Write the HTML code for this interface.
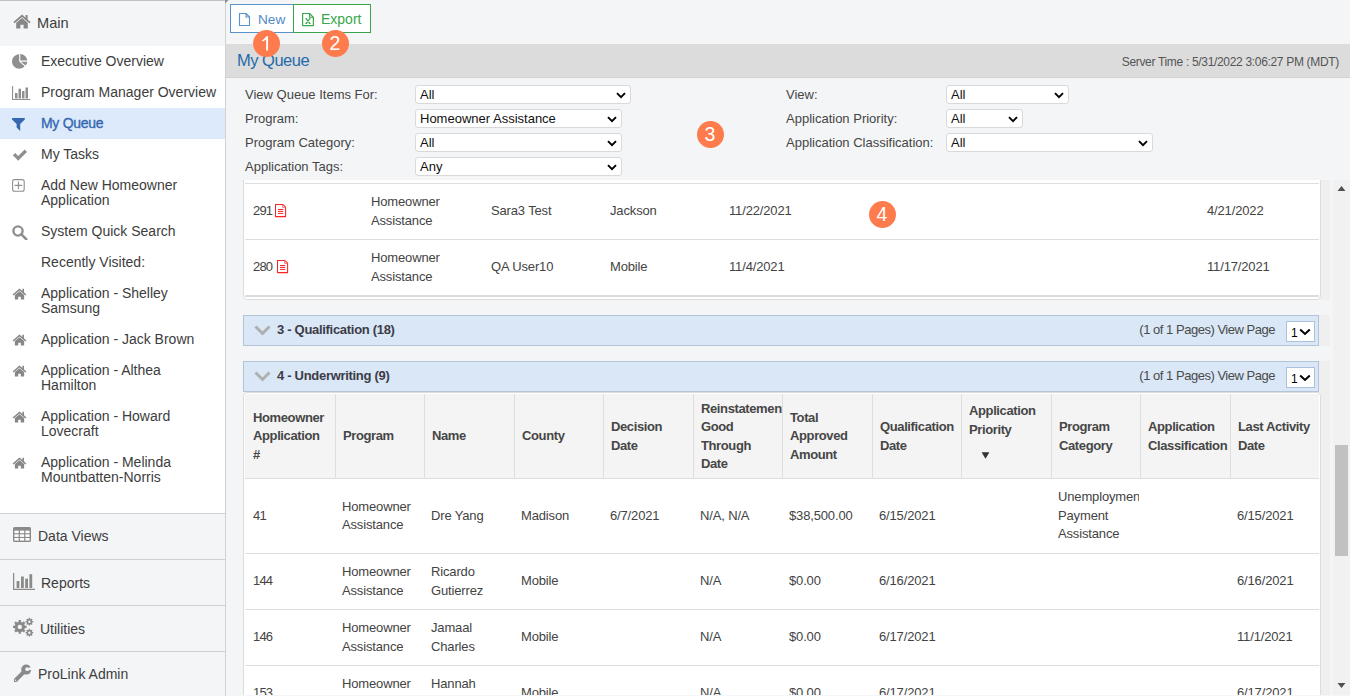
<!DOCTYPE html>
<html><head><meta charset="utf-8">
<style>
*{box-sizing:border-box;margin:0;padding:0}
html,body{width:1350px;height:696px;overflow:hidden;background:#f4f5f7;font-family:"Liberation Sans",sans-serif;color:#333}
.a{position:absolute}
#side{position:absolute;left:0;top:0;width:226px;height:696px;background:#fff;border-right:1px solid #d2d2d2}
.si{position:absolute;left:41px;width:182px;font-size:14px;line-height:15px;color:#3d3d3d;white-space:nowrap}
.bs{position:absolute;left:0;width:225px;height:46px;background:#f4f5f7;border-top:1px solid #d0d0d0}
.bs .t{position:absolute;font-size:14px;line-height:15px;color:#3d3d3d;white-space:nowrap}
.ic{position:absolute}
.badge{position:absolute;width:27px;height:27px;border-radius:50%;background:#fe7b4d;color:#fff;font-size:19.5px;line-height:27px;text-align:center;z-index:20}
.lbl{position:absolute;font-size:13px;line-height:15px;color:#454545;white-space:nowrap}
.sel{position:absolute;height:19px;background:#fff;border:1px solid #d9d9d9;border-radius:3px}.sel span{position:absolute;left:4px;top:1px;font-size:13px;line-height:15px;color:#111}.sel svg{position:absolute;right:4px;top:5.5px}
.td{position:absolute;font-size:13px;line-height:18.5px;color:#434343;white-space:nowrap;letter-spacing:-0.15px}
.th{position:absolute;font-size:13px;line-height:18.5px;color:#464646;font-weight:bold;white-space:nowrap;letter-spacing:-0.38px}
.hl{position:absolute;height:1px;background:#dedede}
.vl{position:absolute;width:1px;background:#dedede}
.sec{position:absolute;left:243px;width:1076px;height:31px;background:#d9e7f6;border:1px solid #b2c4d8}
.sec .tt{position:absolute;left:33px;top:6px;font-size:13px;line-height:15px;font-weight:bold;color:#3c3c48;letter-spacing:-0.3px}
.sec .pg{position:absolute;right:43px;top:6px;font-size:13px;line-height:15px;color:#4a4a4a;letter-spacing:-0.48px}
.sec .ps{position:absolute;left:1042px;top:5px;width:29px;height:21px;background:#fff;border:1px solid #adc2da}
.strip{position:absolute;left:1319px;width:11px;background:#efefef}
</style></head><body>

<!-- SIDEBAR -->
<div id="side">
  <div class="a" style="left:0;top:0;width:225px;height:1px;background:#c2c2c2"></div>
  <div class="a" style="left:0;top:1px;width:225px;height:45px;background:#f4f5f7"></div>
  <svg class="ic" style="left:12.8px;top:14.3px" width="18" height="15" viewBox="0 0 18 15"><path d="M9 0.6 L0.4 8 L1.6 9.3 L9 3 L16.4 9.3 L17.6 8 L14.6 5.4 V1 H12.6 V3.7 Z" fill="#878787"/><path d="M3.2 8.8 L9 4 L14.8 8.8 V14.5 H10.6 V10.8 H7.4 V14.5 H3.2 Z" fill="#878787"/></svg>
  <div class="a" style="left:37px;top:16px;font-size:14.6px;line-height:15px;color:#3d3d3d">Main</div>

  <!-- items -->
  <svg class="ic" style="left:12px;top:54px" width="16" height="15" viewBox="0 0 16 15"><path d="M7.2 0.3 A7.2 7.2 0 1 0 12.6 12.3 L7.2 7.5 Z" fill="#8f8f8f"/><path d="M8.3 0 V6.6 H15.3 A7 7 0 0 0 8.3 0 Z" fill="#8f8f8f"/><path d="M8.9 7.7 L13.4 11.6 A7 7 0 0 0 15.4 7.7 Z" fill="#8f8f8f"/></svg>
  <div class="si" style="top:54px">Executive Overview</div>

  <svg class="ic" style="left:12px;top:86px" width="19" height="14" viewBox="0 0 19 14"><path d="M0.5 0 V13.5 H18.5" stroke="#8f8f8f" stroke-width="1.2" fill="none"/><rect x="3" y="7" width="2.5" height="5.5" fill="#8f8f8f"/><rect x="6.5" y="2.7" width="2.5" height="9.8" fill="#8f8f8f"/><rect x="10" y="5" width="2.5" height="7.5" fill="#8f8f8f"/><rect x="13.5" y="1.5" width="2.5" height="11" fill="#8f8f8f"/></svg>
  <div class="si" style="top:85px">Program Manager Overview</div>

  <div class="a" style="left:0;top:108px;width:225px;height:31px;background:#dceafb"></div>
  <svg class="ic" style="left:12px;top:118px" width="13" height="13" viewBox="0 0 13 13"><path d="M0 0 H12.8 V1.5 L8.2 6 V13 L4.6 9.6 V6 L0 1.5 Z" fill="#3668b1"/></svg>
  <div class="si" style="top:116px;color:#3567b0;font-size:14px;letter-spacing:-0.3px;-webkit-text-stroke:0.35px #3567b0">My Queue</div>

  <svg class="ic" style="left:10px;top:145px" width="20" height="20" viewBox="0 0 20 20"><path d="M2.9 10.2 L5.2 7.9 L8.2 10.9 L14.7 4.6 L17 6.9 L8.2 15.7 Z" fill="#8f8f8f"/></svg>
  <div class="si" style="top:147px">My Tasks</div>

  <svg class="ic" style="left:12px;top:179px" width="13" height="13" viewBox="0 0 13 13"><rect x="0.6" y="0.6" width="11.6" height="11.6" rx="2" stroke="#8f8f8f" stroke-width="1.1" fill="none"/><path d="M6.4 2.6 V10.2 M2.6 6.4 H10.2" stroke="#8f8f8f" stroke-width="1.1"/></svg>
  <div class="si" style="top:178px">Add New Homeowner<br>Application</div>

  <svg class="ic" style="left:12px;top:225px" width="16" height="15" viewBox="0 0 16 15"><circle cx="6" cy="6" r="4.6" stroke="#8f8f8f" stroke-width="2.4" fill="none"/><path d="M9.2 9.2 L14.2 14.2" stroke="#8f8f8f" stroke-width="2.6" stroke-linecap="round"/></svg>
  <div class="si" style="top:224px">System Quick Search</div>

  <div class="si" style="top:255px">Recently Visited:</div>

  <svg class="ic h2" style="left:12px;top:288px" width="15" height="12" viewBox="0 0 18 15"><path d="M9 0.6 L0.4 8 L1.6 9.3 L9 3 L16.4 9.3 L17.6 8 L14.6 5.4 V1 H12.6 V3.7 Z" fill="#878787"/><path d="M3.2 8.8 L9 4 L14.8 8.8 V14.5 H10.6 V10.8 H7.4 V14.5 H3.2 Z" fill="#878787"/></svg>
  <div class="si" style="top:286px">Application - Shelley<br>Samsung</div>

  <svg class="ic" style="left:12px;top:334px" width="15" height="12" viewBox="0 0 18 15"><path d="M9 0.6 L0.4 8 L1.6 9.3 L9 3 L16.4 9.3 L17.6 8 L14.6 5.4 V1 H12.6 V3.7 Z" fill="#878787"/><path d="M3.2 8.8 L9 4 L14.8 8.8 V14.5 H10.6 V10.8 H7.4 V14.5 H3.2 Z" fill="#878787"/></svg>
  <div class="si" style="top:332px">Application - Jack Brown</div>

  <svg class="ic" style="left:12px;top:365px" width="15" height="12" viewBox="0 0 18 15"><path d="M9 0.6 L0.4 8 L1.6 9.3 L9 3 L16.4 9.3 L17.6 8 L14.6 5.4 V1 H12.6 V3.7 Z" fill="#878787"/><path d="M3.2 8.8 L9 4 L14.8 8.8 V14.5 H10.6 V10.8 H7.4 V14.5 H3.2 Z" fill="#878787"/></svg>
  <div class="si" style="top:363px">Application - Althea<br>Hamilton</div>

  <svg class="ic" style="left:12px;top:411px" width="15" height="12" viewBox="0 0 18 15"><path d="M9 0.6 L0.4 8 L1.6 9.3 L9 3 L16.4 9.3 L17.6 8 L14.6 5.4 V1 H12.6 V3.7 Z" fill="#878787"/><path d="M3.2 8.8 L9 4 L14.8 8.8 V14.5 H10.6 V10.8 H7.4 V14.5 H3.2 Z" fill="#878787"/></svg>
  <div class="si" style="top:409px">Application - Howard<br>Lovecraft</div>

  <svg class="ic" style="left:12px;top:457px" width="15" height="12" viewBox="0 0 18 15"><path d="M9 0.6 L0.4 8 L1.6 9.3 L9 3 L16.4 9.3 L17.6 8 L14.6 5.4 V1 H12.6 V3.7 Z" fill="#878787"/><path d="M3.2 8.8 L9 4 L14.8 8.8 V14.5 H10.6 V10.8 H7.4 V14.5 H3.2 Z" fill="#878787"/></svg>
  <div class="si" style="top:455px">Application - Melinda<br>Mountbatten-Norris</div>

  <!-- bottom sections -->
  <div class="bs" style="top:513px">
    <svg class="ic" style="left:12.8px;top:13px" width="18" height="15" viewBox="0 0 18 15"><rect x="0" y="0" width="18" height="15" rx="1.5" fill="#8a8a8a"/><g fill="#fff"><rect x="1.4" y="3.6" width="4.3" height="2.6"/><rect x="6.9" y="3.6" width="4.3" height="2.6"/><rect x="12.4" y="3.6" width="4.2" height="2.6"/><rect x="1.4" y="7.3" width="4.3" height="2.6"/><rect x="6.9" y="7.3" width="4.3" height="2.6"/><rect x="12.4" y="7.3" width="4.2" height="2.6"/><rect x="1.4" y="11" width="4.3" height="2.6"/><rect x="6.9" y="11" width="4.3" height="2.6"/><rect x="12.4" y="11" width="4.2" height="2.6"/></g></svg>
    <div class="t" style="left:38px;top:15px">Data Views</div>
  </div>
  <div class="bs" style="top:559px">
    <svg class="ic" style="left:13px;top:13px" width="22" height="17" viewBox="0 0 22 17"><path d="M0.6 0 V16.3 H22" stroke="#8a8a8a" stroke-width="1.3" fill="none"/><rect x="3.6" y="8" width="2.8" height="7" fill="#8a8a8a"/><rect x="8" y="3.5" width="2.8" height="11.5" fill="#8a8a8a"/><rect x="12.2" y="5.6" width="2.8" height="9.4" fill="#8a8a8a"/><rect x="16.4" y="1.2" width="2.8" height="13.8" fill="#8a8a8a"/></svg>
    <div class="t" style="left:41px;top:16px">Reports</div>
  </div>
  <div class="bs" style="top:605px">
    <svg class="ic" style="left:12px;top:11px" width="23" height="21" viewBox="0 0 23 21"><path fill-rule="evenodd" fill="#8a8a8a" d="M6.64 4.73 L6.59 3.11 L9.01 3.11 L8.96 4.73 L10.64 5.42 L11.75 4.24 L13.46 5.95 L12.28 7.06 L12.97 8.74 L14.59 8.69 L14.59 11.11 L12.97 11.06 L12.28 12.74 L13.46 13.85 L11.75 15.56 L10.64 14.38 L8.96 15.07 L9.01 16.69 L6.59 16.69 L6.64 15.07 L4.96 14.38 L3.85 15.56 L2.14 13.85 L3.32 12.74 L2.63 11.06 L1.01 11.11 L1.01 8.69 L2.63 8.74 L3.32 7.06 L2.14 5.95 L3.85 4.24 L4.96 5.42 Z M7.8 7.7 A2.2 2.2 0 1 0 7.8 12.1 A2.2 2.2 0 1 0 7.8 7.7 Z"/><path fill-rule="evenodd" fill="#8a8a8a" d="M16.76 1.87 L16.71 0.86 L18.09 0.86 L18.04 1.87 L18.95 2.25 L19.63 1.50 L20.60 2.47 L19.85 3.15 L20.23 4.06 L21.24 4.01 L21.24 5.39 L20.23 5.34 L19.85 6.25 L20.60 6.93 L19.63 7.90 L18.95 7.15 L18.04 7.53 L18.09 8.54 L16.71 8.54 L16.76 7.53 L15.85 7.15 L15.17 7.90 L14.20 6.93 L14.95 6.25 L14.57 5.34 L13.56 5.39 L13.56 4.01 L14.57 4.06 L14.95 3.15 L14.20 2.47 L15.17 1.50 L15.85 2.25 Z M17.4 3.5 A1.2 1.2 0 1 0 17.4 5.9 A1.2 1.2 0 1 0 17.4 3.5 Z"/><path fill-rule="evenodd" fill="#8a8a8a" d="M16.76 12.87 L16.71 11.86 L18.09 11.86 L18.04 12.87 L18.95 13.25 L19.63 12.50 L20.60 13.47 L19.85 14.15 L20.23 15.06 L21.24 15.01 L21.24 16.39 L20.23 16.34 L19.85 17.25 L20.60 17.93 L19.63 18.90 L18.95 18.15 L18.04 18.53 L18.09 19.54 L16.71 19.54 L16.76 18.53 L15.85 18.15 L15.17 18.90 L14.20 17.93 L14.95 17.25 L14.57 16.34 L13.56 16.39 L13.56 15.01 L14.57 15.06 L14.95 14.15 L14.20 13.47 L15.17 12.50 L15.85 13.25 Z M17.4 14.5 A1.2 1.2 0 1 0 17.4 16.9 A1.2 1.2 0 1 0 17.4 14.5 Z"/></svg>
    <div class="t" style="left:40px;top:16px">Utilities</div>
  </div>
  <div class="bs" style="top:651px">
    <svg class="ic" style="left:12px;top:10px" width="22" height="22" viewBox="0 0 22 22"><defs><mask id="wm"><rect width="22" height="22" fill="#fff"/><path d="M14 7.5 L20 4.3 L21 8.6 Z" fill="#000"/><circle cx="15.2" cy="7.2" r="1.9" fill="#000"/></mask></defs><g mask="url(#wm)" fill="#8a8a8a"><circle cx="14.2" cy="7.6" r="5"/><path d="M3.2 18.6 L11.2 10.6" stroke="#8a8a8a" stroke-width="4.1" stroke-linecap="round"/></g><circle cx="3.6" cy="18.2" r="0.7" fill="#f4f5f7"/></svg>
    <div class="t" style="left:38px;top:15px">ProLink Admin</div>
  </div>
</div>

<!-- MAIN -->
<svg class="ic" style="left:225px;top:0;z-index:5" width="5" height="5" viewBox="0 0 5 5"><path d="M0 0 H3.6 L0 3.6 Z" fill="#8d8d8d"/></svg>
<div class="a" style="left:226px;top:0;width:1124px;height:696px;background:#f4f5f7"></div>
<!-- toolbar -->
<div class="a" style="left:230px;top:4px;width:64px;height:29px;background:#fff;border:1px solid #5992c9"></div>
<svg class="ic" style="left:238px;top:12px" width="13" height="15" viewBox="0 0 13 15"><path d="M1.5 1.5 H8 L11.5 5 V13.5 H1.5 Z" stroke="#5992c9" stroke-width="1.1" fill="none" stroke-linejoin="round"/><path d="M8 1.5 V5 H11.5" stroke="#5992c9" stroke-width="1.1" fill="none"/></svg>
<div class="a" style="left:258px;top:12px;font-size:13.6px;line-height:15px;color:#4f8ac6">New</div>
<div class="a" style="left:293px;top:4px;width:78px;height:29px;background:#fff;border:1px solid #3aa64b"></div>
<svg class="ic" style="left:301px;top:12px" width="14" height="15" viewBox="0 0 14 15"><path d="M1.6 1.5 H8.6 L12.4 5.3 V13.6 H1.6 Z" stroke="#3aa64b" stroke-width="1.2" fill="none" stroke-linejoin="round"/><path d="M8.6 1.5 V5.3 H12.4" stroke="#3aa64b" stroke-width="1.1" fill="none"/><path d="M5.2 6.8 L8.8 11.4 M8.8 6.8 L5.2 11.4 M4.4 6.8 H6.2 M7.8 6.8 H9.6 M4.4 11.4 H6.2 M7.8 11.4 H9.6" stroke="#3aa64b" stroke-width="1.1"/></svg>
<div class="a" style="left:321px;top:12px;font-size:14px;line-height:15px;color:#3aa64b">Export</div>

<!-- header bar -->
<div class="a" style="left:226px;top:44px;width:1124px;height:34px;background:#dcdcdc"></div>
<div class="a" style="left:226px;top:77px;width:1124px;height:1px;background:#d2d2d2"></div>
<div class="a" style="left:237px;top:52px;font-size:16.5px;line-height:17px;color:#1f6aab;letter-spacing:-0.5px">My Queue</div>
<div class="a" style="left:1121px;top:55px;width:218px;text-align:right;font-size:12px;line-height:14px;color:#555;letter-spacing:-0.32px;white-space:nowrap">Server Time : 5/31/2022 3:06:27 PM (MDT)</div>

<!-- filters -->
<div class="lbl" style="left:245px;top:87px">View Queue Items For:</div>
<div class="lbl" style="left:245px;top:111px">Program:</div>
<div class="lbl" style="left:245px;top:135px">Program Category:</div>
<div class="lbl" style="left:245px;top:159px">Application Tags:</div>
<div class="sel" style="left:415px;top:85px;width:216px"><span>All</span><svg width="10" height="7" viewBox="0 0 10 7"><path d="M1 1.2 L5 5.2 L9 1.2" stroke="#000" stroke-width="1.9" fill="none"/></svg></div>
<div class="sel" style="left:415px;top:109px;width:207px"><span>Homeowner Assistance</span><svg width="10" height="7" viewBox="0 0 10 7"><path d="M1 1.2 L5 5.2 L9 1.2" stroke="#000" stroke-width="1.9" fill="none"/></svg></div>
<div class="sel" style="left:415px;top:133px;width:207px"><span>All</span><svg width="10" height="7" viewBox="0 0 10 7"><path d="M1 1.2 L5 5.2 L9 1.2" stroke="#000" stroke-width="1.9" fill="none"/></svg></div>
<div class="sel" style="left:415px;top:157px;width:207px"><span>Any</span><svg width="10" height="7" viewBox="0 0 10 7"><path d="M1 1.2 L5 5.2 L9 1.2" stroke="#000" stroke-width="1.9" fill="none"/></svg></div>
<div class="lbl" style="left:786px;top:87px">View:</div>
<div class="lbl" style="left:786px;top:111px">Application Priority:</div>
<div class="lbl" style="left:786px;top:135px">Application Classification:</div>
<div class="sel" style="left:946px;top:85px;width:123px"><span>All</span><svg width="10" height="7" viewBox="0 0 10 7"><path d="M1 1.2 L5 5.2 L9 1.2" stroke="#000" stroke-width="1.9" fill="none"/></svg></div>
<div class="sel" style="left:946px;top:109px;width:77px"><span>All</span><svg width="10" height="7" viewBox="0 0 10 7"><path d="M1 1.2 L5 5.2 L9 1.2" stroke="#000" stroke-width="1.9" fill="none"/></svg></div>
<div class="sel" style="left:946px;top:133px;width:207px"><span>All</span><svg width="10" height="7" viewBox="0 0 10 7"><path d="M1 1.2 L5 5.2 L9 1.2" stroke="#000" stroke-width="1.9" fill="none"/></svg></div>

<!-- scroll area -->
<div class="a" style="left:226px;top:180px;width:1107px;height:516px;overflow:hidden">
  <!-- coordinates inside are offset by (226,180) -->
  <div class="a" style="left:0;top:0;width:1107px;height:516px">
  </div>
</div>

<!-- panel 2 (top table) absolute in page coords -->
<div class="strip" style="top:180px;height:120px"></div>
<div class="a" style="left:243px;top:160px;width:1078px;height:140px;background:#fff;border:1px solid #dcdcdc;border-radius:4px;clip-path:inset(20px 0 0 0)"></div>
<div class="hl" style="left:245px;top:183px;width:1074px"></div>
<div class="hl" style="left:245px;top:239px;width:1074px"></div>
<div class="a" style="left:245px;top:295px;width:1074px;height:2px;background:#dcdcdc"></div>
<div class="td" style="left:253px;top:202px;letter-spacing:-0.8px">291</div>
<svg class="ic" style="left:275px;top:204px" width="12" height="14" viewBox="0 0 12 14"><path d="M0.5 0.5 H7.9 L10.6 3.2 V12.6 H0.5 Z" stroke="#fa2222" stroke-width="1.05" fill="none" stroke-linejoin="round"/><path d="M7.6 0.6 V3.4 H10.5" stroke="#fa6a6a" stroke-width="0.9" fill="none"/><path d="M3 5.5 H8.2 M3 7.4 H8.2 M3 9.4 H8.2" stroke="#fa2222" stroke-width="1"/></svg>
<div class="td" style="left:371px;top:193px">Homeowner<br>Assistance</div>
<div class="td" style="left:491px;top:202px">Sara3 Test</div>
<div class="td" style="left:610px;top:202px">Jackson</div>
<div class="td" style="left:729px;top:202px">11/22/2021</div>
<div class="td" style="left:1207px;top:202px">4/21/2022</div>

<div class="td" style="left:253px;top:258px;letter-spacing:-0.8px">280</div>
<svg class="ic" style="left:277px;top:260px" width="12" height="14" viewBox="0 0 12 14"><path d="M0.5 0.5 H7.9 L10.6 3.2 V12.6 H0.5 Z" stroke="#fa2222" stroke-width="1.05" fill="none" stroke-linejoin="round"/><path d="M7.6 0.6 V3.4 H10.5" stroke="#fa6a6a" stroke-width="0.9" fill="none"/><path d="M3 5.5 H8.2 M3 7.4 H8.2 M3 9.4 H8.2" stroke="#fa2222" stroke-width="1"/></svg>
<div class="td" style="left:371px;top:249px">Homeowner<br>Assistance</div>
<div class="td" style="left:491px;top:258px">QA User10</div>
<div class="td" style="left:610px;top:258px">Mobile</div>
<div class="td" style="left:729px;top:258px">11/4/2021</div>
<div class="td" style="left:1207px;top:258px">11/17/2021</div>

<!-- section 3 -->
<div class="strip" style="top:315px;height:31px"></div>
<div class="sec" style="top:315px">
  <svg class="ic" style="left:10px;top:9px" width="17" height="11" viewBox="0 0 17 11"><path d="M1.5 1.5 L8.5 8.5 L15.5 1.5" stroke="#afafaf" stroke-width="3" fill="none"/></svg>
  <div class="tt">3 - Qualification (18)</div>
  <div class="pg">(1 of 1 Pages) View Page</div>
  <div class="ps"><span class="a" style="left:4px;top:4px;font-size:12px;line-height:14px;color:#000">1</span><svg class="ic" style="left:12px;top:6px" width="12" height="8" viewBox="0 0 12 8"><path d="M1.2 1.5 L6 6 L10.8 1.5" stroke="#000" stroke-width="2" fill="none"/></svg></div>
</div>

<!-- section 4 -->
<div class="strip" style="top:361px;height:335px"></div>
<div class="sec" style="top:361px">
  <svg class="ic" style="left:10px;top:9px" width="17" height="11" viewBox="0 0 17 11"><path d="M1.5 1.5 L8.5 8.5 L15.5 1.5" stroke="#afafaf" stroke-width="3" fill="none"/></svg>
  <div class="tt">4 - Underwriting (9)</div>
  <div class="pg">(1 of 1 Pages) View Page</div>
  <div class="ps"><span class="a" style="left:4px;top:4px;font-size:12px;line-height:14px;color:#000">1</span><svg class="ic" style="left:12px;top:6px" width="12" height="8" viewBox="0 0 12 8"><path d="M1.2 1.5 L6 6 L10.8 1.5" stroke="#000" stroke-width="2" fill="none"/></svg></div>
</div>

<!-- section4 table -->
<div class="a" style="left:243px;top:392px;width:1078px;height:320px;background:#fff;border:1px solid #dcdcdc;border-radius:4px"></div>
<div class="a" style="left:245px;top:394px;width:1074px;height:84px;background:#f4f4f4"></div>
<div class="hl" style="left:245px;top:478px;width:1074px"></div>
<div class="hl" style="left:245px;top:553px;width:1074px"></div>
<div class="hl" style="left:245px;top:609px;width:1074px"></div>
<div class="hl" style="left:245px;top:665px;width:1074px"></div>
<div class="vl" style="left:335px;top:394px;height:84px"></div>
<div class="vl" style="left:424px;top:394px;height:84px"></div>
<div class="vl" style="left:514px;top:394px;height:84px"></div>
<div class="vl" style="left:603px;top:394px;height:84px"></div>
<div class="vl" style="left:693px;top:394px;height:84px"></div>
<div class="vl" style="left:782px;top:394px;height:84px"></div>
<div class="vl" style="left:872px;top:394px;height:84px"></div>
<div class="vl" style="left:961px;top:394px;height:84px"></div>
<div class="vl" style="left:1051px;top:394px;height:84px"></div>
<div class="vl" style="left:1140px;top:394px;height:84px"></div>
<div class="vl" style="left:1230px;top:394px;height:84px"></div>
<div class="th" style="left:253px;top:408.75px">Homeowner<br>Application<br>#</div>
<div class="th" style="left:343px;top:427.25px">Program</div>
<div class="th" style="left:432px;top:427.25px">Name</div>
<div class="th" style="left:522px;top:427.25px">County</div>
<div class="th" style="left:611px;top:418.00px">Decision<br>Date</div>
<div class="th" style="left:701px;top:399.50px;width:81px;overflow:hidden">Reinstatement<br>Good<br>Through<br>Date</div>
<div class="th" style="left:790px;top:408.75px">Total<br>Approved<br>Amount</div>
<div class="th" style="left:880px;top:418.00px">Qualification<br>Date</div>
<div class="th" style="left:1059px;top:418.00px">Program<br>Category</div>
<div class="th" style="left:1148px;top:418.00px">Application<br>Classification</div>
<div class="th" style="left:1238px;top:418.00px">Last Activity<br>Date</div>
<div class="th" style="left:969px;top:402px">Application<br>Priority</div>
<svg class="ic" style="left:981px;top:452px" width="9" height="7" viewBox="0 0 9 7"><path d="M0.6 0.3 H8.4 L4.5 6.8 Z" fill="#333"/></svg>
<div class="td" style="left:253px;top:506.75px;letter-spacing:-0.8px">41</div>
<div class="td" style="left:342px;top:497.50px">Homeowner<br>Assistance</div>
<div class="td" style="left:431px;top:506.75px">Dre Yang</div>
<div class="td" style="left:521px;top:506.75px">Madison</div>
<div class="td" style="left:610px;top:506.75px">6/7/2021</div>
<div class="td" style="left:700px;top:506.75px">N/A, N/A</div>
<div class="td" style="left:789px;top:506.75px">$38,500.00</div>
<div class="td" style="left:879px;top:506.75px">6/15/2021</div>
<div class="td" style="left:1058px;top:488.25px;width:81px;overflow:hidden">Unemployment<br>Payment<br>Assistance</div>
<div class="td" style="left:1237px;top:506.75px">6/15/2021</div>
<div class="td" style="left:253px;top:572.25px;letter-spacing:-0.8px">144</div>
<div class="td" style="left:342px;top:563.00px">Homeowner<br>Assistance</div>
<div class="td" style="left:431px;top:563.00px">Ricardo<br>Gutierrez</div>
<div class="td" style="left:521px;top:572.25px">Mobile</div>
<div class="td" style="left:700px;top:572.25px">N/A</div>
<div class="td" style="left:789px;top:572.25px">$0.00</div>
<div class="td" style="left:879px;top:572.25px">6/16/2021</div>
<div class="td" style="left:1237px;top:572.25px">6/16/2021</div>
<div class="td" style="left:253px;top:628.25px;letter-spacing:-0.8px">146</div>
<div class="td" style="left:342px;top:619.00px">Homeowner<br>Assistance</div>
<div class="td" style="left:431px;top:619.00px">Jamaal<br>Charles</div>
<div class="td" style="left:521px;top:628.25px">Mobile</div>
<div class="td" style="left:700px;top:628.25px">N/A</div>
<div class="td" style="left:789px;top:628.25px">$0.00</div>
<div class="td" style="left:879px;top:628.25px">6/17/2021</div>
<div class="td" style="left:1237px;top:628.25px">11/1/2021</div>
<div class="td" style="left:253px;top:684.25px;letter-spacing:-0.8px">153</div>
<div class="td" style="left:342px;top:675.00px">Homeowner<br>Assistance</div>
<div class="td" style="left:431px;top:675.00px">Hannah<br>Smith</div>
<div class="td" style="left:521px;top:684.25px">Mobile</div>
<div class="td" style="left:700px;top:684.25px">N/A</div>
<div class="td" style="left:789px;top:684.25px">$0.00</div>
<div class="td" style="left:879px;top:684.25px">6/17/2021</div>
<div class="td" style="left:1237px;top:684.25px">6/17/2021</div>

<!-- badges -->
<div class="badge" style="left:252.5px;top:29.5px"><svg class="ic" style="left:0;top:0" width="27" height="27" viewBox="-0.5 -0.5 27 27"><path d="M13.6 5.8 V20" stroke="#fff" stroke-width="1.9" fill="none"/><path d="M13.6 6.2 Q11.8 9 8.8 10.4" stroke="#fff" stroke-width="1.6" fill="none"/></svg></div>
<div class="badge" style="left:321.5px;top:29.5px">2</div>
<div class="badge" style="left:696.5px;top:120.5px">3</div>
<div class="badge" style="left:868.5px;top:200.5px">4</div>

<!-- scrollbar -->
<div class="a" style="left:1333px;top:180px;width:17px;height:516px;background:#f1f1f1"></div>
<svg class="ic" style="left:1337px;top:185px" width="9" height="7" viewBox="0 0 9 7"><path d="M0.5 6 H8.5 L4.5 1 Z" fill="#505050"/></svg>
<div class="a" style="left:1335px;top:445px;width:13px;height:111px;background:#c1c1c1"></div>
<svg class="ic" style="left:1337px;top:682px" width="9" height="7" viewBox="0 0 9 7"><path d="M0.5 1 H8.5 L4.5 6 Z" fill="#505050"/></svg>
<div class="a" style="left:226px;top:695px;width:1124px;height:1px;background:#f4f5f7;z-index:30"></div>
</body></html>
